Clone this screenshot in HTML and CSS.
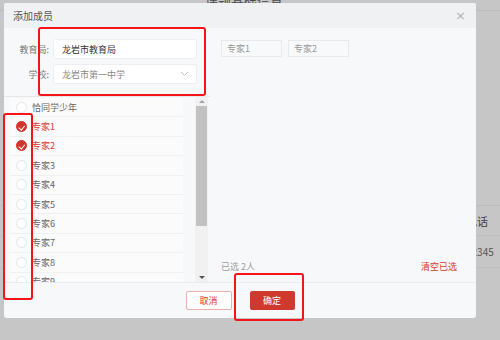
FILE: index.html
```html
<!DOCTYPE html>
<html>
<head>
    <title>添加成员</title>
    <link rel="stylesheet" href="styles.css">
</head>
<body>
    <div class="page">
        <div class="page-head">课题基础信息</div>
        <div class="page-gap"></div>
        <div class="page-row page-row-head"><span>电话</span></div>
        <div class="page-row"><span>12345</span></div>
    </div>

    <div class="dialog">
        <div class="dialog-head">
            <span class="dialog-title">添加成员</span>
            <span class="dialog-close">×</span>
        </div>
        <div class="dialog-body">
            <div class="picker">
                <div class="filters">
                    <div class="field">
                        <label>教育局:</label>
                        <div class="input">龙岩市教育局</div>
                    </div>
                    <div class="field">
                        <label>学校:</label>
                        <div class="input select">
                            <span>龙岩市第一中学</span>
                            <svg width="9" height="6" viewBox="0 0 9 6"><polyline points="1,1 4.5,4.5 8,1" fill="none" stroke="#c0c4cc" stroke-width="1"/></svg>
                        </div>
                    </div>
                </div>
                <div class="list-wrap">
                    <ul class="list">
                        <li class="item"><span class="radio"></span>恰同学少年</li>
                        <li class="item checked"><span class="radio"></span>专家1</li>
                        <li class="item checked"><span class="radio"></span>专家2</li>
                        <li class="item"><span class="radio"></span>专家3</li>
                        <li class="item"><span class="radio"></span>专家4</li>
                        <li class="item"><span class="radio"></span>专家5</li>
                        <li class="item"><span class="radio"></span>专家6</li>
                        <li class="item"><span class="radio"></span>专家7</li>
                        <li class="item"><span class="radio"></span>专家8</li>
                        <li class="item"><span class="radio"></span>专家9</li>
                    </ul>
                    <div class="scrollbar">
                        <span class="arrow up"></span>
                        <span class="thumb"></span>
                        <span class="track"></span>
                        <span class="arrow down"></span>
                    </div>
                </div>
            </div>
            <div class="chosen">
                <div class="tags">
                    <span class="tag">专家1</span>
                    <span class="tag">专家2</span>
                </div>
                <div class="chosen-foot">
                    <span class="count">已选 2人</span>
                    <span class="clear">清空已选</span>
                </div>
            </div>
        </div>
        <div class="dialog-foot">
            <button class="btn btn-plain">取消</button>
            <button class="btn btn-primary">确定</button>
        </div>
    </div>

    <!-- annotation boxes -->
    <div class="mark mark-form"></div>
    <div class="mark mark-radios"></div>
    <div class="mark mark-ok"></div>
</body>
</html>
```

FILE: styles.css
```css
* {
    box-sizing: border-box;
}

body {
    margin: 0;
    width: 500px;
    height: 340px;
    overflow: hidden;
    position: relative;
    background-color: #c6c6c6;
    font-family: "Noto Sans CJK SC", "Noto Sans", sans-serif;
    font-size: 9px;
    color: #666;
}

/* page behind the dialog */
.page {
    display: flex;
    flex-direction: column;
}

.page-head {
    height: 17px;
    margin-top: -6px;
    padding-left: 205px;
    font-size: 13px;
    line-height: 13px;
    color: #4a4a4a;
    border-bottom: 1px solid #bcbcbc;
}

.page-gap {
    height: 194px;
}

.page-row {
    height: 32px;
    display: flex;
    align-items: center;
    padding-left: 466px;
    border-bottom: 1px solid #bdbdbd;
    font-size: 10px;
    color: #555;
}

.page-row-head {
    border-top: 1px solid #bdbdbd;
    height: 31px;
    font-size: 11px;
    color: #444;
}

/* dialog */
.dialog {
    position: absolute;
    left: 4px;
    top: 3px;
    width: 472px;
    height: 315px;
    background-color: #f7f8fa;
    border-radius: 3px;
    overflow: hidden;
    display: flex;
    flex-direction: column;
}

.dialog-head {
    height: 25px;
    flex: none;
    display: flex;
    align-items: center;
    justify-content: space-between;
    padding: 0 10px 0 9px;
    background-color: #f0f1f3;
}

.dialog-title {
    font-size: 10px;
    color: #555;
}

.dialog-close {
    font-family: "DejaVu Sans", sans-serif;
    font-size: 13px;
    color: #b0b3b8;
    line-height: 1;
}

.dialog-body {
    height: 254px;
    flex: none;
    display: flex;
}

.picker {
    width: 206px;
    display: flex;
    flex-direction: column;
}

.filters {
    height: 68px;
    flex: none;
    padding-top: 11px;
    display: flex;
    flex-direction: column;
    gap: 5px;
}

.field {
    display: flex;
    align-items: center;
}

.field label {
    width: 45px;
    margin-right: 4px;
    text-align: right;
    color: #777;
}

.input {
    width: 144px;
    height: 20px;
    padding-left: 8px;
    padding-right: 7px;
    display: flex;
    align-items: center;
    justify-content: space-between;
    background-color: #fff;
    border: 1px solid #eceef1;
    border-radius: 3px;
    color: #333;
}

.select {
    color: #888;
}

.list-wrap {
    flex: 1;
    min-height: 0;
    display: flex;
    border-top: 1px solid #e6e7ea;
}

.list {
    list-style: none;
    margin: 0;
    padding: 1px 0 0 6px;
    width: 179px;
    overflow: hidden;
}

.item {
    height: 19.4px;
    display: flex;
    align-items: center;
    gap: 5px;
    padding-left: 6px;
    background-color: #fbfbfc;
    border-bottom: 1px solid #eff0f2;
    color: #666;
}

.radio {
    width: 11px;
    height: 11px;
    flex: none;
    border-radius: 50%;
    background-color: #fff;
    border: 1px solid #e4e6ea;
    position: relative;
}

.item.checked {
    color: #d9392e;
}

.item.checked .radio {
    background-color: #d3342a;
    border-color: #d3342a;
}

.item.checked .radio::after {
    content: "";
    position: absolute;
    left: 3px;
    top: 1.5px;
    width: 2.5px;
    height: 4.5px;
    border-right: 1px solid #fff;
    border-bottom: 1px solid #fff;
    transform: rotate(40deg);
}

.scrollbar {
    width: 13px;
    margin-left: 12px;
    display: flex;
    flex-direction: column;
    align-items: center;
    background-color: #f1f1f1;
}

.arrow {
    height: 9px;
    width: 13px;
    flex: none;
    display: flex;
    align-items: center;
    justify-content: center;
}

.arrow::before {
    content: "";
    border-left: 3px solid transparent;
    border-right: 3px solid transparent;
}

.arrow.up::before {
    border-bottom: 3px solid #a3a3a3;
}

.arrow.down::before {
    border-top: 3px solid #505050;
}

.thumb {
    width: 11px;
    height: 120px;
    flex: none;
    background-color: #c1c1c1;
}

.track {
    flex: 1;
}

.chosen {
    flex: 1;
    display: flex;
    flex-direction: column;
    justify-content: space-between;
    padding: 12px 19px 9px 11px;
}

.tags {
    display: flex;
    gap: 6px;
}

.tag {
    width: 61px;
    height: 17px;
    padding-left: 5px;
    display: flex;
    align-items: center;
    border: 1px solid #e8e9ec;
    background-color: #f8f9fa;
    color: #999;
}

.chosen-foot {
    display: flex;
    justify-content: space-between;
    color: #a0a0a0;
}

.clear {
    color: #d9392e;
}

.dialog-foot {
    flex: 1;
    display: flex;
    justify-content: center;
    align-items: flex-start;
    gap: 18px;
    padding-top: 8px;
    border-top: 1px solid #ebecef;
}

.btn {
    width: 46px;
    height: 19px;
    padding: 0;
    font-family: inherit;
    font-size: 9px;
    border-radius: 2px;
    cursor: pointer;
}

.btn-plain {
    background-color: #fff;
    border: 1px solid #eab0ac;
    color: #d9392e;
}

.btn-primary {
    background-color: #d0392e;
    border: 1px solid #d0392e;
    color: #fff;
    width: 45px;
}

/* red annotation boxes drawn over the screenshot */
.mark {
    position: absolute;
    border: 2.5px solid #f5141a;
    border-radius: 3px;
}

.mark-form {
    left: 38px;
    top: 27px;
    width: 168px;
    height: 69px;
}

.mark-radios {
    left: 3px;
    top: 113px;
    width: 30px;
    height: 187px;
}

.mark-ok {
    left: 234px;
    top: 273px;
    width: 70px;
    height: 48px;
}
```
